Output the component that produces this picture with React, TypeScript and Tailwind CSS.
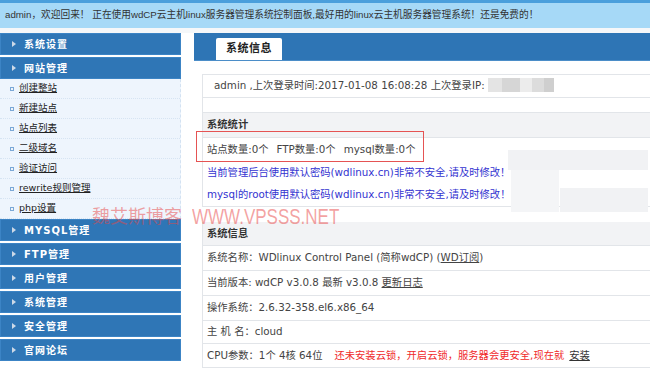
const SANS = "font-['DejaVu_Sans','Noto_Sans_CJK_SC',sans-serif]";

const topMenus = ["MYSQL管理", "FTP管理", "用户管理", "系统管理", "安全管理", "官网论坛"];
const siteLinks = ["创建整站", "新建站点", "站点列表", "二级域名", "验证访问", "rewrite规则管理", "php设置"];

function MenuHead({ label, last }: { label: string; last?: boolean }) {
  return (
    <div
      className={`h-[22px] ${last ? "" : "mb-[2px]"} bg-[#2f76b6] border border-[#3c84c5] flex items-center pl-[11px] gap-[8px]`}
    >
      <span className="w-0 h-0 border-y-[3.5px] border-y-transparent border-l-[4px] border-l-[#cdd9e7]" />
      <span className="text-white font-bold text-[10px] tracking-[1px]">{label}</span>
    </div>
  );
}

function Sidebar() {
  return (
    <div className="w-[181px] shrink-0 flex flex-col">
      <MenuHead label="系统设置" />
      <MenuHead label="网站管理" last />
      <div className="bg-[#eef5fd] border-r border-dashed border-[#d3e2f2]">
        {siteLinks.map((s) => (
          <div
            key={s}
            className="h-[20px] flex items-center pl-[10px] gap-[5px] border-b border-dotted border-[#d6e4f3]"
          >
            <span className="w-[4px] h-[4px] border border-[#7ba8d6]" />
            <span className="text-[9.5px] text-[#222] underline">{s}</span>
          </div>
        ))}
      </div>
      {topMenus.map((m) => (
        <MenuHead key={m} label={m} />
      ))}
    </div>
  );
}

function Row({ h, children, className = "" }: { h: string; children?: React.ReactNode; className?: string }) {
  return (
    <div className={`${h} flex items-center border-b border-[#e2e5e9] ${className}`}>{children}</div>
  );
}

function Main() {
  return (
    <div className="flex-1 ml-[13px] flex flex-col">
      <div className="h-[28px] bg-[#2e75b5] border-b border-[#4b8dc8] flex items-end pl-[22px]">
        <div className="w-[66px] h-[22px] bg-white rounded-t-[2px] flex items-center justify-center text-[11px] font-bold tracking-[0.5px] text-[#222]">
          系统信息
        </div>
      </div>

      <div className="pl-[8px] pt-[13px] text-[10.3px] text-[#444]">
        <div className="border-l border-t border-[#e2e5e9]">
          <Row h="h-[23px]" className="pl-[11px]">
            admin ,上次登录时间:2017-01-08 16:08:28 上次登录IP:
          </Row>
          <Row h="h-[15px]" />
          <Row h="h-[25px]" className="bg-[#f2f3f5] pl-[4px] font-bold text-[#333]">
            系统统计
          </Row>
          <div className="h-[24px] flex items-center pl-[4px] gap-[8px]">
            <span>站点数量:0个</span>
            <span>FTP数量:0个</span>
            <span>mysql数量:0个</span>
          </div>
          <div className="h-[22px] flex items-center pl-[4px] text-[#3333d0]">
            当前管理后台使用默认密码(wdlinux.cn)非常不安全,请及时修改！
          </div>
          <Row h="h-[23px]" className="pl-[4px] text-[#3333d0]">
            mysql的root使用默认密码(wdlinux.cn)非常不安全,请及时修改！
          </Row>
        </div>

        <div className="mt-[15px] border-l border-[#e2e5e9]">
          <Row h="h-[24px]" className="bg-[#f2f3f5] pl-[4px] font-bold text-[#333]">
            系统信息
          </Row>
          <Row h="h-[25px]" className="pl-[4px]">
            系统名称：WDlinux Control Panel (简称wdCP) (<span className="underline">WD订阅</span>)
          </Row>
          <Row h="h-[25px]" className="pl-[4px] whitespace-pre">
            当前版本: wdCP v3.0.8 最新 v3.0.8 <span className="underline">更新日志</span>
          </Row>
          <Row h="h-[25px]" className="pl-[4px]">
            操作系统：2.6.32-358.el6.x86_64
          </Row>
          <Row h="h-[23px]" className="pl-[4px] whitespace-pre">
            主 机 名：cloud
          </Row>
          <Row h="h-[24px]" className="pl-[4px]">
            <span>CPU参数：1个 4核 64位</span>
            <span className="ml-[12px] text-[#f02a2a]">还未安装云锁，开启云锁，服务器会更安全,现在就</span>
            <span className="ml-[5px] underline text-[#333]">安装</span>
          </Row>
        </div>
      </div>
    </div>
  );
}

export default function App() {
  return (
    <div className={`relative w-[650px] h-[370px] overflow-hidden bg-white ${SANS}`}>
      <div className="h-[28px] border-t-[3px] border-[#4a9fdc] bg-[#a6d9f7] flex items-center pl-[5px] text-[9.7px] text-[#333] font-['Liberation_Sans','Noto_Sans_CJK_SC',sans-serif] whitespace-pre">
        admin，欢迎回来！ 正在使用wdCP云主机linux服务器管理系统控制面板,最好用的linux云主机服务器管理系统！还是免费的！
      </div>
      <div className="h-[5px] bg-[#f5f7f9]" />
      <div className="flex">
        <Sidebar />
        <Main />
      </div>

      {/* censored IP / mosaic */}
      <div className="absolute left-[488px] top-[78px] w-[66px] h-[14px] flex">
        <div className="w-[14px] bg-[#e4e4e4]" />
        <div className="w-[18px] bg-[#d6d6d6]" />
        <div className="w-[12px] bg-[#ececec]" />
        <div className="w-[12px] bg-[#dcdcdc]" />
        <div className="w-[10px] bg-[#cfcfcf]" />
      </div>
      <div className="absolute left-[508px] top-[150px] w-[140px] h-[20px] bg-[#f1f2f4]" />
      <div className="absolute left-[511px] top-[170px] w-[48px] h-[42px] bg-[#f4f5f7]" />
      <div className="absolute left-[560px] top-[188px] w-[88px] h-[24px] bg-[#f1f2f4]" />

      {/* annotation box */}
      <div className="absolute left-[196px] top-[131px] w-[228px] h-[31px] border border-[#e55353]" />

      {/* watermark */}
      <div className="absolute left-[92px] top-[204px] flex items-center gap-[10px] text-[rgba(232,70,70,0.5)] font-['Liberation_Sans','Noto_Sans_CJK_SC',sans-serif] pointer-events-none">
        <span className="text-[18px]">魏艾斯博客</span>
        <span className="text-[17px] scale-y-125 origin-center">WWW.VPSSS.NET</span>
      </div>
    </div>
  );
}
